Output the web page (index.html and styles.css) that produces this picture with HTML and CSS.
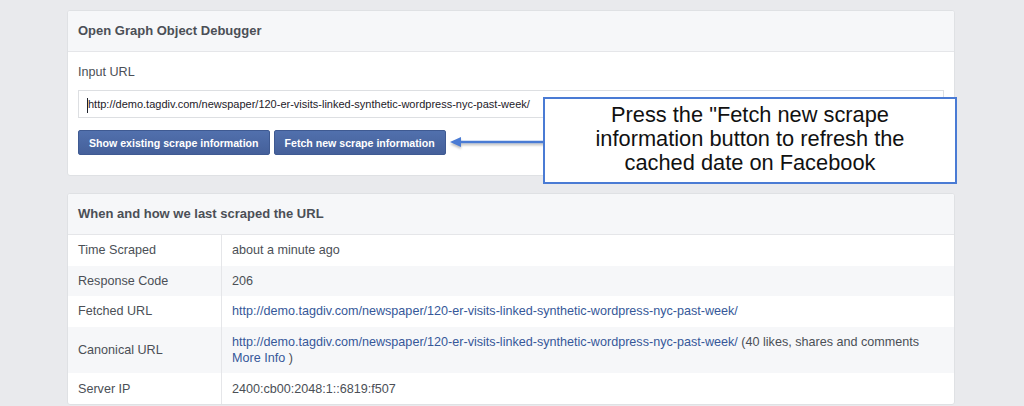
FILE: index.html
```html
<!DOCTYPE html>
<html lang="en">
<head>
  <meta charset="UTF-8" />
  <title>Open Graph Object Debugger</title>
  <link rel="stylesheet" href="styles.css">
</head>
<body>
  <div class="page">
    <section class="panel">
      <div class="panel-head">Open Graph Object Debugger</div>
      <div class="panel-body">
        <div class="field-label">Input URL</div>
        <div class="url-input"><span class="caret"></span>http://demo.tagdiv.com/newspaper/120-er-visits-linked-synthetic-wordpress-nyc-past-week/</div>
        <div class="actions">
          <button class="btn">Show existing scrape information</button>
          <button class="btn">Fetch new scrape information</button>
        </div>
      </div>
    </section>

    <section class="panel">
      <div class="panel-head">When and how we last scraped the URL</div>
      <table class="scrape">
        <tr>
          <td class="key">Time Scraped</td>
          <td>about a minute ago</td>
        </tr>
        <tr>
          <td class="key">Response Code</td>
          <td>206</td>
        </tr>
        <tr>
          <td class="key">Fetched URL</td>
          <td><a href="#">http://demo.tagdiv.com/newspaper/120-er-visits-linked-synthetic-wordpress-nyc-past-week/</a></td>
        </tr>
        <tr>
          <td class="key">Canonical URL</td>
          <td><a href="#">http://demo.tagdiv.com/newspaper/120-er-visits-linked-synthetic-wordpress-nyc-past-week/</a> (40 likes, shares and comments <a href="#">More Info</a> )</td>
        </tr>
        <tr>
          <td class="key">Server IP</td>
          <td>2400:cb00:2048:1::6819:f507</td>
        </tr>
      </table>
    </section>

    <svg class="arrow" width="100" height="16" viewBox="0 0 100 16">
      <line x1="10" y1="8" x2="96" y2="8" stroke="#4a7bd4" stroke-width="2.5" />
      <polygon points="1,8 12,3 12,13" fill="#4a7bd4" />
    </svg>

    <div class="callout">
      Press the "Fetch new scrape<br>
      information button to refresh the<br>
      cached date on Facebook
    </div>
  </div>
</body>
</html>
```

FILE: styles.css
```css
body {
  margin: 0;
  background-color: #e9eaed;
  font-family: 'Liberation Sans', Arial, sans-serif;
  color: #4b4f56;
  font-size: 12.6px;
}

.page {
  position: relative;
  width: 888px;
  padding-top: 10px;
  margin-left: 67px;
}

.panel {
  background-color: #fff;
  border: 1px solid #dfe1e4;
  border-radius: 3px;
  margin-bottom: 16px;
  overflow: hidden;
}

.panel + .panel {
  margin-top: 17px;
}

.panel-head {
  background-color: #f6f7f9;
  border-bottom: 1px solid #e5e6e9;
  height: 40px;
  line-height: 40px;
  padding-left: 10px;
  font-size: 13px;
  font-weight: bold;
  color: #4b4f56;
}

.panel-body {
  padding: 12px 10px 20px 10px;
}

.field-label {
  line-height: 16px;
  margin-bottom: 10px;
}

.url-input {
  height: 26px;
  line-height: 26px;
  border: 1px solid #dddfe2;
  padding-left: 8px;
  font-size: 11px;
  color: #1d2129;
  white-space: nowrap;
  overflow: hidden;
}

.caret {
  display: inline-block;
  width: 1px;
  height: 15px;
  background-color: #1d2129;
  vertical-align: middle;
}

.actions {
  display: flex;
  gap: 4px;
  margin-top: 12px;
}

.btn {
  height: 25px;
  padding: 0 10px;
  background: linear-gradient(#5170ad, #45609a);
  border: 1px solid #3f5a92;
  border-radius: 2px;
  color: #fff;
  font-family: 'Liberation Sans', Arial, sans-serif;
  font-size: 10.6px;
  font-weight: bold;
}

.scrape {
  width: 100%;
  border-collapse: collapse;
}

.scrape td {
  padding: 7.3px 10px;
  line-height: 16px;
  vertical-align: middle;
}

.scrape tr:nth-child(even) td {
  background-color: #f6f7f9;
}

.scrape td.key {
  width: 133px;
  border-right: 1px solid #e5e6e9;
}

.scrape a {
  color: #365899;
  text-decoration: none;
}

.arrow {
  position: absolute;
  left: 382px;
  top: 134px;
  filter: drop-shadow(0 2px 1px rgba(0, 0, 0, 0.25));
}

.callout {
  position: absolute;
  left: 476px;
  top: 97px;
  width: 410px;
  height: 79px;
  border: 2px solid #4a7bd4;
  background-color: #fff;
  color: #111;
  font-size: 21.8px;
  line-height: 24px;
  text-align: center;
  padding-top: 4px;
}
```
